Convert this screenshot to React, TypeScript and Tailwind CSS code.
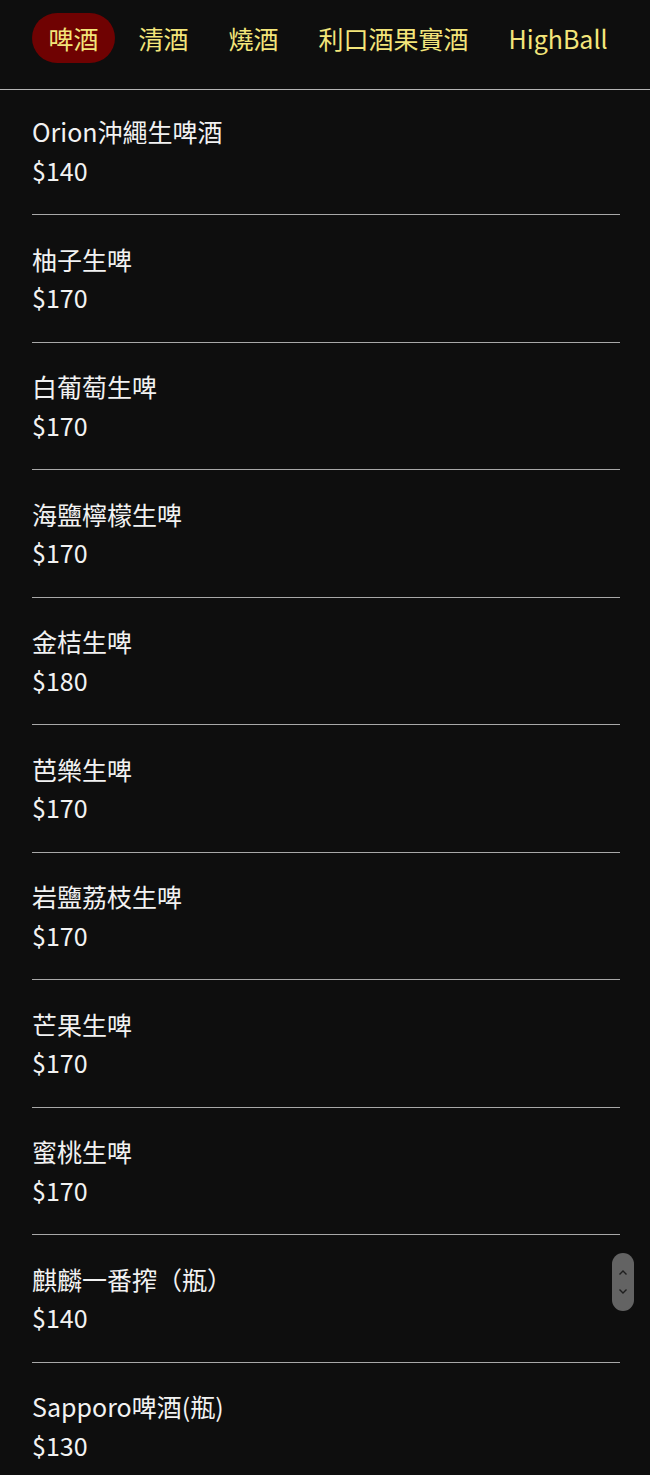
import React from "react";

type Item = {
  name: string;
  price: number;
};

const tabs = ["啤酒", "清酒", "燒酒", "利口酒果實酒", "HighBall"];

const items: Item[] = [
  { name: "Orion沖繩生啤酒", price: 140 },
  { name: "柚子生啤", price: 170 },
  { name: "白葡萄生啤", price: 170 },
  { name: "海鹽檸檬生啤", price: 170 },
  { name: "金桔生啤", price: 180 },
  { name: "芭樂生啤", price: 170 },
  { name: "岩鹽荔枝生啤", price: 170 },
  { name: "芒果生啤", price: 170 },
  { name: "蜜桃生啤", price: 170 },
  { name: "麒麟一番搾（瓶）", price: 140 },
  { name: "Sapporo啤酒(瓶)", price: 130 },
];

const font = { fontFamily: '"Noto Sans CJK TC", "Noto Sans", sans-serif' };

const Tab = ({ label, active }: { label: string; active?: boolean }) => {
  return (
    <button
      className={`shrink-0 rounded-full px-[16.5px] py-[6px] text-[25px] leading-[38px] text-[#f3e57a] ${
        active ? "bg-[#6f0202]" : ""
      }`}
    >
      {label}
    </button>
  );
};

export default function App() {
  return (
    <div
      className="relative h-[1475px] overflow-hidden bg-[#0e0e0e] text-[#f2f2f2]"
      style={font}
    >
      <nav className="flex gap-[7px] border-b border-[#b4b4b4] pl-8 pt-[13px] pb-[26px]">
        {tabs.map((t, i) => (
          <Tab key={t} label={t} active={i === 0} />
        ))}
      </nav>
      <ul className="pl-8 pr-[30px]">
        {items.map((item) => (
          <li
            key={item.name}
            className="border-b border-[#a8a8a8] pt-[25.5px] pb-[26px] text-[25px] leading-[37.5px] first:pt-[23px]"
          >
            <div>{item.name}</div>
            <div className="mt-[1px] -mb-[1px]">${item.price}</div>
          </li>
        ))}
      </ul>
      {/* scroll handle */}
      <div className="absolute left-[612px] top-[1253px] flex h-[58px] w-[22px] flex-col items-center justify-center gap-[12px] rounded-full bg-[#636363]">
        <svg width="10" height="7" viewBox="0 0 10 7" fill="none" stroke="#1e1e1e" strokeWidth="1.4">
          <path d="M1.5 5.5 L5 2 L8.5 5.5" />
        </svg>
        <svg width="10" height="7" viewBox="0 0 10 7" fill="none" stroke="#1e1e1e" strokeWidth="1.4">
          <path d="M1.5 1.5 L5 5 L8.5 1.5" />
        </svg>
      </div>
    </div>
  );
}
